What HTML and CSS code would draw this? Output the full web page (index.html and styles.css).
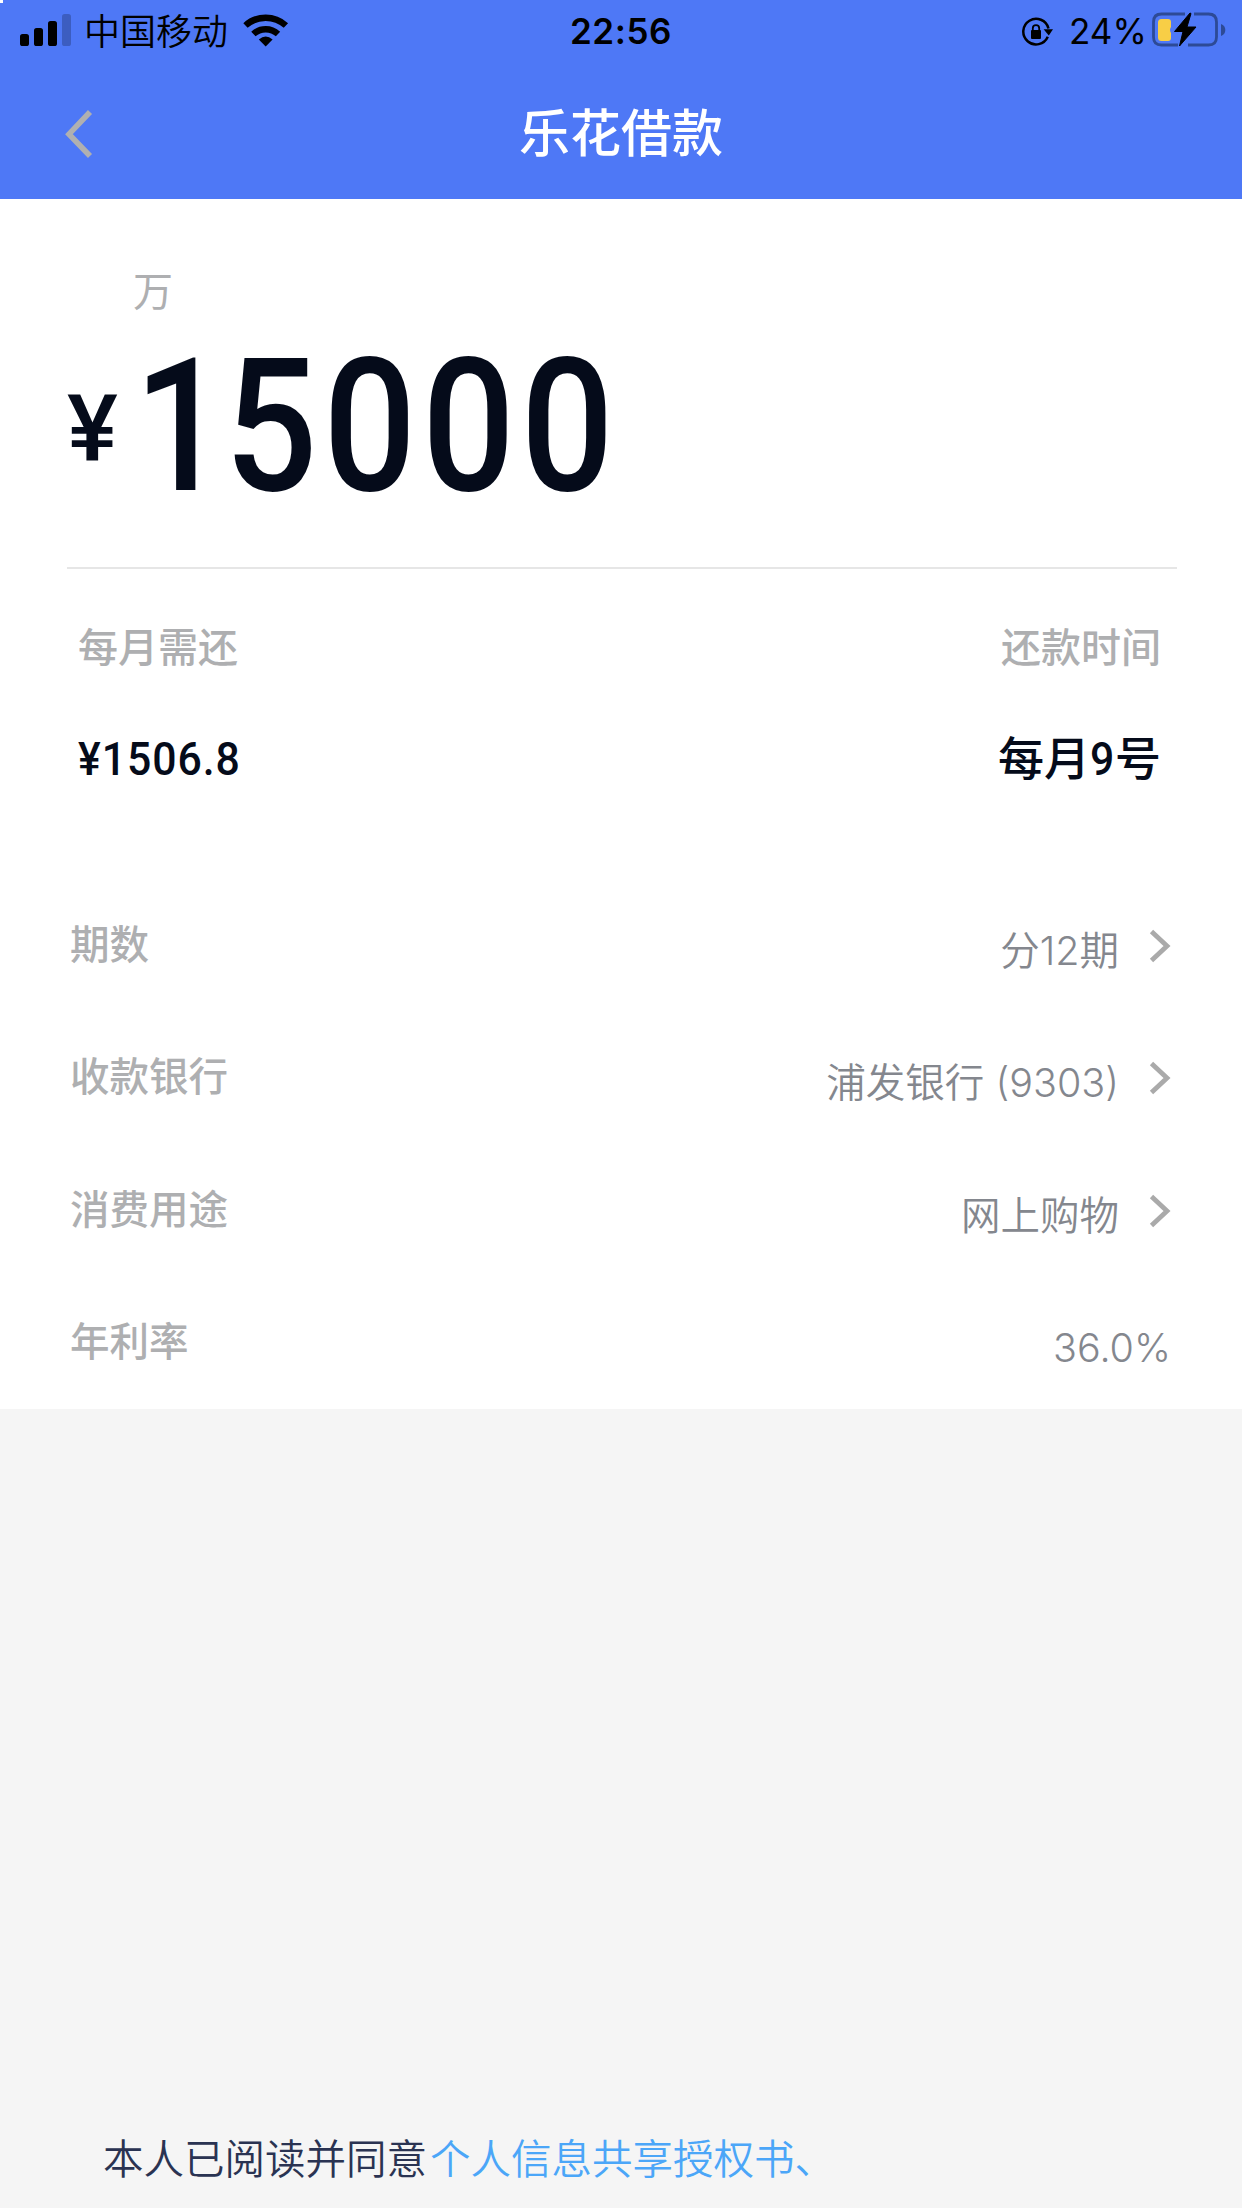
FILE: index.html
```html
<!DOCTYPE html>
<html lang="zh-CN">
<head>
<meta charset="utf-8">
<title>乐花借款</title>
<link rel="stylesheet" href="styles.css">
</head>
<body>
<header class="header">
  <span class="corner"></span>
  <div class="status">
    <div class="status-left">
      <svg class="signal" width="52" height="32" viewBox="0 0 52 32">
        <rect x="0" y="20" width="9" height="12" rx="2.6"/>
        <rect x="14" y="14" width="9" height="18" rx="2.6"/>
        <rect x="28" y="7" width="9" height="25" rx="2.6"/>
        <rect x="42" y="0" width="9" height="32" rx="2.6" opacity=".22"/>
      </svg>
      <span class="carrier">中国移动</span>
      <svg class="wifi" width="46" height="34" viewBox="0 0 46 34">
        <g fill="none" stroke="#000" stroke-width="6.4">
          <path d="M2.5 12.5A30 30 0 0 1 42.9 12.5"/>
          <path d="M10.4 21A18.2 18.2 0 0 1 35 21"/>
        </g>
        <path d="M22.7 33.5L15.8 26.6Q22.7 20.2 29.6 26.6Z"/>
      </svg>
    </div>
    <span class="clock">22:56</span>
    <div class="status-right">
      <svg class="lock" width="34" height="32" viewBox="0 0 34 32">
        <path d="M26.8 20.8A12.8 12.8 0 1 1 27.5 12.5" fill="none" stroke="#000" stroke-width="2.5"/>
        <path d="M22.6 13.2H32L27.8 19.5Z"/>
        <rect x="10" y="14" width="10" height="9" rx="1"/>
        <path d="M11.8 15V12.3a3.2 3.2 0 0 1 6.4 0V15" fill="none" stroke="#000" stroke-width="1.8"/>
      </svg>
      <span class="percent">24%</span>
      <svg class="battery" width="74" height="36" viewBox="0 0 74 36">
        <path d="M33 2H9.500Q1.500 2 1.500 10V25Q1.500 33 9.500 33H26M42 2H56.500Q64.500 2 64.500 10V25Q64.500 33 56.500 33H36" fill="none" stroke="#2d4a96" stroke-width="2.8"/>
        <path d="M69 12Q73.300 13.500 73.300 18T69 24Z" fill="#2d4a96"/>
        <path d="M9.500 7H16Q19 7 19 10V15Q17 18 19 21V26Q19 29 16 29H9.500Q6 29 6 25.500V10.500Q6 7 9.500 7Z" fill="#f8ce46"/>
        <path d="M38 1L22.500 19.500H31L27.500 34L44 15H35L39 1.500Z" stroke="#000" stroke-width="1"/>
      </svg>
    </div>
  </div>
  <div class="nav">
    <svg class="back" width="28" height="48" viewBox="0 0 28 48"><path d="M25 2L4 24.200L25 46" fill="none" stroke="#b0b0b0" stroke-width="5.600"/></svg>
    <h1 class="title">乐花借款</h1>
  </div>
</header>

<main class="card">
  <div class="unit">万</div>
  <div class="amount"><span class="yen">¥</span><span class="digits"><span class="lead">1</span>5000</span></div>
  <div class="summary">
    <div class="summary-item">
      <div class="caption">每月需还</div>
      <div class="figure"><span class="din">¥1506.8</span></div>
    </div>
    <div class="summary-item summary-end">
      <div class="caption">还款时间</div>
      <div class="figure">每月<span class="nine">9</span>号</div>
    </div>
  </div>
  <div class="rows">
    <div class="row"><span class="label">期数</span><span class="value">分12期</span><svg class="chevron" width="22" height="34" viewBox="0 0 22 34"><path d="M2.500 2.500L18 17L2.500 31.500"/></svg></div>
    <div class="row"><span class="label">收款银行</span><span class="value">浦发银行 (9303)</span><svg class="chevron" width="22" height="34" viewBox="0 0 22 34"><path d="M2.500 2.500L18 17L2.500 31.500"/></svg></div>
    <div class="row"><span class="label">消费用途</span><span class="value">网上购物</span><svg class="chevron" width="22" height="34" viewBox="0 0 22 34"><path d="M2.500 2.500L18 17L2.500 31.500"/></svg></div>
    <div class="row"><span class="label">年利率</span><span class="value">36.0%</span></div>
  </div>
</main>

<footer class="agreement"><span>本人已阅读并同意</span><a class="link">个人信息共享授权书、</a></footer>
</body>
</html>
```
FILE: styles.css
```css
* { box-sizing: border-box; }
body {
  margin: 0;
  width: 1242px;
  height: 2208px;
  overflow: hidden;
  display: flex;
  flex-direction: column;
  background: #f5f5f5;
  font-family: Inter, "Noto Sans CJK SC", sans-serif;
}
svg { display: block; flex: none; }

.header { position: relative; height: 199px; background: #4e78f6; }
.corner { position: absolute; left: 0; top: 0; width: 3px; height: 3px; background: #fff; }
.status {
  display: grid;
  grid-template-columns: 1fr auto 1fr;
  height: 62px;
  line-height: 62px;
  font-size: 36px;
  color: #000;
}
.status-left { display: flex; padding-left: 20px; }
.signal { margin-top: 14px; }
.carrier { margin-left: 12px; width: 144px; font-size: 36px; line-height: 65px; font-weight: 350; white-space: nowrap; }
.wifi { margin: 13px 0 0 15px; }
.clock { font-weight: 600; font-size: 35px; letter-spacing: .6px; }
.status-right { display: flex; justify-content: flex-end; padding-right: 16px; }
.lock { margin-top: 16px; }
.percent { margin-left: 14px; width: 83px; font-size: 35px; white-space: nowrap; }
.battery { margin-top: 12px; }
.nav { display: flex; align-items: center; height: 143px; padding-left: 65px; }
.title {
  flex: 1;
  margin: 0 93px 0 0;
  font-size: 51px;
  font-weight: 500;
  line-height: 145px;
  text-align: center;
  color: #fff;
}

.card { height: 1210px; padding-top: 63px; background: #fff; }
.unit { padding-left: 133px; font-size: 40px; line-height: 60px; color: #aeafb1; }
.amount {
  display: flex;
  height: 247px;
  margin: 0 65px 0 67px;
  border-bottom: 2px solid #e6e6e6;
  color: #050b1a;
  font-family: Roboto, sans-serif;
  font-weight: 500;
}
.yen { width: 67px; font-size: 93px; line-height: 216px; transform: scaleX(1.03); transform-origin: 0 50%; }
.digits {
  font-size: 186px;
  line-height: 209px;
  letter-spacing: 6.500px;
  transform: scaleX(.88);
  transform-origin: 0 50%;
}
.lead { letter-spacing: -3px; }

.summary { display: flex; justify-content: space-between; padding: 47px 81px 0 78px; }
.caption { font-size: 40px; font-weight: 500; line-height: 64px; color: #aeafb1; }
.figure { margin-top: 31px; height: 94px; line-height: 94px; font-size: 46px; font-weight: 500; color: #050b1a; white-space: nowrap; }
.summary-end { text-align: right; }
.din, .nine { display: inline-block; font-family: Roboto, sans-serif; transform: scaleX(.93); transform-origin: 0 50%; }
.din { letter-spacing: 1px; line-height: 93px; }
.nine { width: 25px; }

.rows { padding: 108px 71px 0 70px; }
.row { display: flex; height: 132.400px; font-size: 39.500px; line-height: 64px; }
.label { flex: 1; font-weight: 500; color: #aeafb1; }
.value { padding-top: 6px; font-weight: 350; color: #84878e; }
.chevron { margin: 16px 0 0 30px; fill: none; stroke: #aaa; stroke-width: 4.800; }

.agreement {
  margin-top: auto;
  padding-left: 103px;
  height: 79px;
  font-size: 40.500px;
  line-height: 62px;
  color: #2a3352;
  font-weight: 350;
  display: flex;
  gap: 3px;
}
.link { color: #4ba6f8; }
```
